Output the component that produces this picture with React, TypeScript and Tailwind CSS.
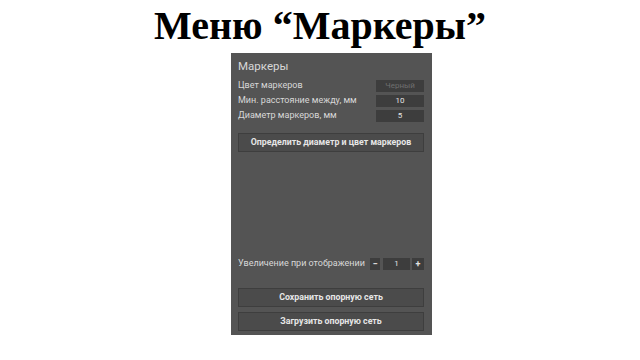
import React from 'react';

const Field: React.FC<{ label: string; value: string; dim?: boolean }> = ({ label, value, dim }) => (
  <div className="flex items-center justify-between h-[15px]">
    <span className="text-[9px] text-[#d8d8d8]">{label}</span>
    <div
      className={`w-[48px] h-[12px] bg-[#3d3d3d] flex items-center justify-center text-[8px] ${
        dim ? 'text-[#6f6f6f]' : 'text-[#e4e4e4]'
      }`}
    >
      {value}
    </div>
  </div>
);

const PanelButton: React.FC<{ children: React.ReactNode }> = ({ children }) => (
  <button className="w-full h-[19px] bg-[#4b4b4b] border border-[#3e3e3e] text-[8.8px] font-bold text-[#e6e6e6] flex items-center justify-center">
    {children}
  </button>
);

const App: React.FC = () => {
  return (
    <div className="w-[640px] h-[360px] bg-white overflow-hidden font-['Roboto',sans-serif]">
      <h1 className="text-center pt-[3px] h-[51px] text-[40px] leading-[46px] font-bold text-black font-['Liberation_Serif',serif]">
        Меню “Маркеры”
      </h1>
      <div className="ml-[231px] mt-[2px] w-[201px] h-[282px] bg-[#545454] pl-[7px] pr-[8px] pt-[4px] pb-[4px] flex flex-col">
        <div className="text-[11.5px] text-[#d8d8d8] h-[18px] leading-[18px]">Маркеры</div>
        <div className="flex flex-col mt-[3px]">
          <Field label="Цвет маркеров" value="Черный" dim />
          <Field label="Мин. расстояние между, мм" value="10" />
          <Field label="Диаметр маркеров, мм" value="5" />
        </div>
        <div className="mt-[10px]">
          <PanelButton>Определить диаметр и цвет маркеров</PanelButton>
        </div>
        <div className="flex-1" />
        <div className="flex items-center justify-between h-[14px]">
          <span className="text-[9px] text-[#d8d8d8]">Увеличение при отображении</span>
          <div className="flex items-center">
            <div className="w-[10px] h-[12px] bg-[#3d3d3d] text-[#e4e4e4] text-[9px] leading-[12px] text-center font-bold">−</div>
            <div className="ml-[3px] w-[27px] h-[12px] bg-[#3d3d3d] text-[#e4e4e4] text-[8px] leading-[12px] text-center">1</div>
            <div className="ml-[2px] w-[12px] h-[12px] bg-[#3d3d3d] text-[#e4e4e4] text-[9px] leading-[12px] text-center font-bold">+</div>
          </div>
        </div>
        <div className="mt-[17px] flex flex-col gap-[5px]">
          <PanelButton>Сохранить опорную сеть</PanelButton>
          <PanelButton>Загрузить опорную сеть</PanelButton>
        </div>
      </div>
    </div>
  );
};

export default App;
